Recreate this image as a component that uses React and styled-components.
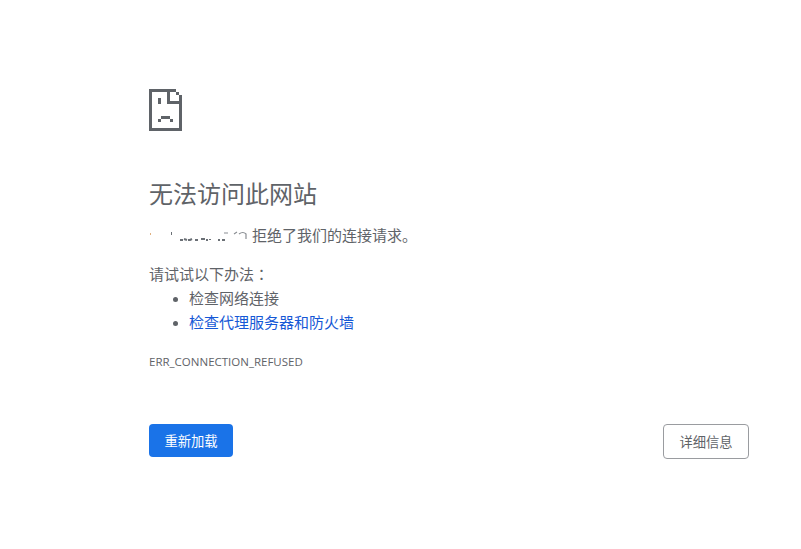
import React from 'react'
import styled, { createGlobalStyle } from 'styled-components'

const GlobalStyle = createGlobalStyle`
  html, body {
    margin: 0;
    padding: 0;
    background: #fff;
  }
`

const Page = styled.div`
  box-sizing: border-box;
  width: 801px;
  height: 549px;
  padding: 89px 52px 0 149px;
  color: #5f6368;
  font-family: "Liberation Sans", "Noto Sans CJK SC", sans-serif;
  font-size: 15px;
  line-height: 24px;
`

const SadFile = styled.svg`
  display: block;
  width: 33px;
  height: 42px;
`

const Title = styled.h1`
  margin: 46px 0 0;
  font-size: 24px;
  font-weight: 400;
  line-height: 36px;
`

const Message = styled.p`
  margin: 11px 0 0;
`

const Redacted = styled.svg`
  display: inline-block;
  width: 103px;
  height: 14px;
  vertical-align: -2px;
`

const Suggest = styled.p`
  margin: 14px 0 0;
`

const Colon = styled.span`
  font-family: "Noto Sans CJK TC", sans-serif;
`

const List = styled.ul`
  margin: 0;
  padding: 0 0 0 40px;
  list-style: disc;
`

const Link = styled.a`
  color: #1558d6;
  text-decoration: none;
`

const Code = styled.div`
  margin-top: 19px;
  font-family: "Open Sans", sans-serif;
  font-size: 11.5px;
  line-height: 16px;
`

const Actions = styled.div`
  display: flex;
  justify-content: space-between;
  align-items: flex-start;
  margin-top: 54px;
`

const Button = styled.button`
  box-sizing: border-box;
  height: ${p => (p.$primary ? '33px' : '35px')};
  width: ${p => (p.$primary ? '84px' : '86px')};
  padding: 0;
  border: ${p => (p.$primary ? '0' : '1px solid #9a9ca0')};
  border-radius: 4px;
  background: ${p => (p.$primary ? '#1a73e8' : '#fff')};
  color: ${p => (p.$primary ? '#fff' : '#5f6368')};
  font-family: inherit;
  font-size: 13.3px;
`

export default function App() {
  return (
    <Page>
      <GlobalStyle />
      <SadFile viewBox="0 0 11 14" shapeRendering="crispEdges">
        <path fill="#5f6368" d="M0 0h9v1h1v1h1v12H0zM1 1v12h9V5H6V1zM7 1v3h3V2H9V1z" fillRule="evenodd" />
        <path fill="#5f6368" d="M3 3h1v2H3zM4 9h3v1H4zM3 10h1v1H3zM7 10h1v1H7z" />
      </SadFile>
      <Title>无法访问此网站</Title>
      <Message>
        <Redacted viewBox="0 0 103 14">
          <rect x="1" y="4" width="1" height="2" fill="#e0b080" />
          <rect x="22" y="3" width="1" height="3" fill="#6b7076" />
          <path d="M31 11h3M35 10l3 1M39 11h2l2-1M46 11h3M52 10h3v1M57 11h2M61 10v1M69 11h2M73 11h3" stroke="#6b7076" strokeWidth="2" fill="none" />
          <path d="M75 4h4M85 5l3-2M90 5q4-3 7 0v5" stroke="#8a8e93" strokeWidth="1.2" fill="none" />
        </Redacted>
        拒绝了我们的连接请求。
      </Message>
      <Suggest>请试试以下办法<Colon>：</Colon></Suggest>
      <List>
        <li>检查网络连接</li>
        <li><Link href="#">检查代理服务器和防火墙</Link></li>
      </List>
      <Code>ERR_CONNECTION_REFUSED</Code>
      <Actions>
        <Button $primary>重新加载</Button>
        <Button>详细信息</Button>
      </Actions>
    </Page>
  )
}
